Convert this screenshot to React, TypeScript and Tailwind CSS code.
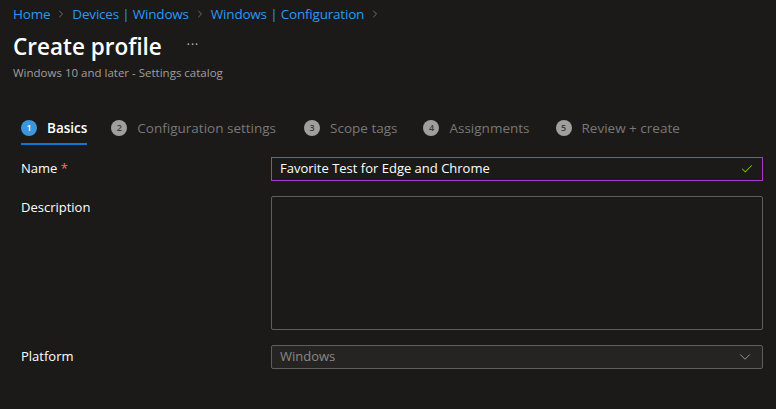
import { Check, ChevronDown, ChevronRight } from 'lucide-react'

const steps = [
  { n: 1, label: 'Basics' },
  { n: 2, label: 'Configuration settings' },
  { n: 3, label: 'Scope tags' },
  { n: 4, label: 'Assignments' },
  { n: 5, label: 'Review + create' },
]

const crumbs = ['Home', 'Devices | Windows', 'Windows | Configuration']

export default function App() {
  return (
    <div className="w-[776px] h-[409px] bg-[#1b1a19] text-white font-['Open_Sans',sans-serif] overflow-hidden">
      {/* breadcrumb */}
      <div className="flex items-center pl-[13px] pt-[7px] h-[21px] text-[13.5px] leading-5">
        {crumbs.map(c => (
          <div key={c} className="flex items-center">
            <span className="text-[#2899f5] tracking-[-0.2px]">{c}</span>
            <ChevronRight size={12} strokeWidth={1.5} className="text-[#8a8886] mx-[5px]" />
          </div>
        ))}
      </div>

      {/* title */}
      <div className="flex items-center pl-[13px] mt-[12px] h-[28px]">
        <h1 className="text-[22.5px] font-semibold leading-7">Create profile</h1>
        <span className="ml-[25px] text-[12px] tracking-[1px] text-[#c8c6c4] -mt-[4px]">···</span>
      </div>
      <p className="pl-[13px] mt-[4px] text-[11.5px] text-[#a19f9d] leading-4">Windows 10 and later - Settings catalog</p>

      {/* steps */}
      <div className="flex pl-[21px] mt-[38px] h-[27px]">
        {steps.map((s, i) => (
          <div key={s.n} className={`flex items-start ${i === 0 ? 'mr-[24px]' : i === 1 ? 'mr-[28px]' : 'mr-[26px]'}`}>
            <div className={`flex flex-col ${i === 0 ? 'border-b-2 border-[#0f78d4] h-[26px]' : ''}`}>
              <div className="flex items-center h-[18px]">
                <span
                  className={`w-[16px] h-[16px] rounded-full flex items-center justify-center text-[9px] font-semibold ${
                    i === 0 ? 'bg-[#3a96dd] text-white' : 'bg-[#a19f9d] text-[#3b3a39]'
                  }`}
                >
                  {s.n}
                </span>
                <span
                  className={`ml-[10px] text-[13.5px] ${i === 0 ? 'font-semibold text-white' : 'text-[#797775]'}`}
                >
                  {s.label}
                </span>
              </div>
            </div>
          </div>
        ))}
      </div>

      {/* form */}
      <div className="pl-[21px] pr-[13px] mt-[11px] flex flex-col text-[13px]">
        <div className="flex items-center h-[24px]">
          <label className="w-[250px]">
            Name <span className="text-[#f1707b]">*</span>
          </label>
          <div className="flex-1 h-[24px] border border-[#a33bc8] flex items-center pl-[8px] pr-[8px]">
            <span className="flex-1">Favorite Test for Edge and Chrome</span>
            <Check size={14} strokeWidth={1.8} className="text-[#6bb700]" />
          </div>
        </div>

        <div className="flex items-start mt-[15px]">
          <label className="w-[250px] mt-[2px]">Description</label>
          <div className="flex-1 h-[134px] border border-[#605e5c] rounded-[2px]" />
        </div>

        <div className="flex items-center mt-[15px] h-[24px]">
          <label className="w-[250px]">Platform</label>
          <div className="flex-1 h-[24px] border border-[#605e5c] rounded-[2px] bg-[#252423] flex items-center pl-[8px] pr-[8px]">
            <span className="flex-1 text-[#8a8886]">Windows</span>
            <ChevronDown size={18} strokeWidth={1.2} className="text-[#a19f9d]" />
          </div>
        </div>
      </div>
    </div>
  )
}
